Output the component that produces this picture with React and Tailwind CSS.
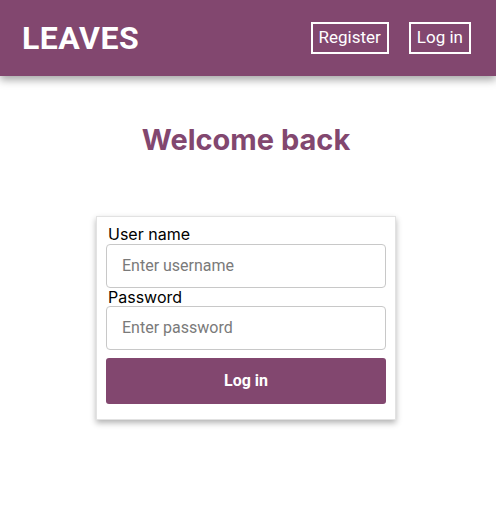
export default function App() {
    return (
        <div className="min-h-screen bg-white font-['Roboto',sans-serif]">
            {/* Header */}
            <header className="flex h-[76px] items-center justify-between bg-[#82476f] pl-[22px] pr-[25px] shadow-[0_4px_8px_rgba(0,0,0,0.35)]">
                <h1 className="text-[32px] font-bold tracking-[0.5px] text-white">LEAVES</h1>
                <nav className="flex items-center gap-[20px]">
                    <button className="h-[32px] border-2 border-white px-[6px] text-[17px] text-white">
                        Register
                    </button>
                    <button className="h-[32px] border-2 border-white px-[6px] text-[17px] text-white">
                        Log in
                    </button>
                </nav>
            </header>

            {/* Content */}
            <main className="flex flex-col items-center pr-[4px]">
                <h2 className="mt-[42px] font-['Inter',sans-serif] text-[29px] font-bold text-[#82476f]">
                    Welcome back
                </h2>

                <form className="mt-[54px] flex w-[300px] flex-col border border-[#e2e2e2] px-[9px] pt-[8px] pb-[15px] shadow-[0_3px_6px_rgba(0,0,0,0.3)]">
                    <label className="pl-[2px] font-['Inter',sans-serif] text-[16px] leading-[19px] text-black">
                        User name
                    </label>
                    <input
                        placeholder="Enter username"
                        className="h-[44px] rounded-[4px] border border-[#c8c8c8] px-[15px] text-[16px] placeholder:text-[#7a7a7a]"
                    />
                    <label className="mt-[1px] pl-[2px] font-['Inter',sans-serif] text-[16px] leading-[17px] text-black">
                        Password
                    </label>
                    <input
                        type="password"
                        placeholder="Enter password"
                        className="h-[44px] rounded-[4px] border border-[#c8c8c8] px-[15px] text-[16px] placeholder:text-[#7a7a7a]"
                    />
                    <button
                        type="button"
                        className="mt-[8px] h-[46px] rounded-[3px] bg-[#82476f] text-[16px] font-bold text-white"
                    >
                        Log in
                    </button>
                </form>
            </main>
        </div>
    );
}
